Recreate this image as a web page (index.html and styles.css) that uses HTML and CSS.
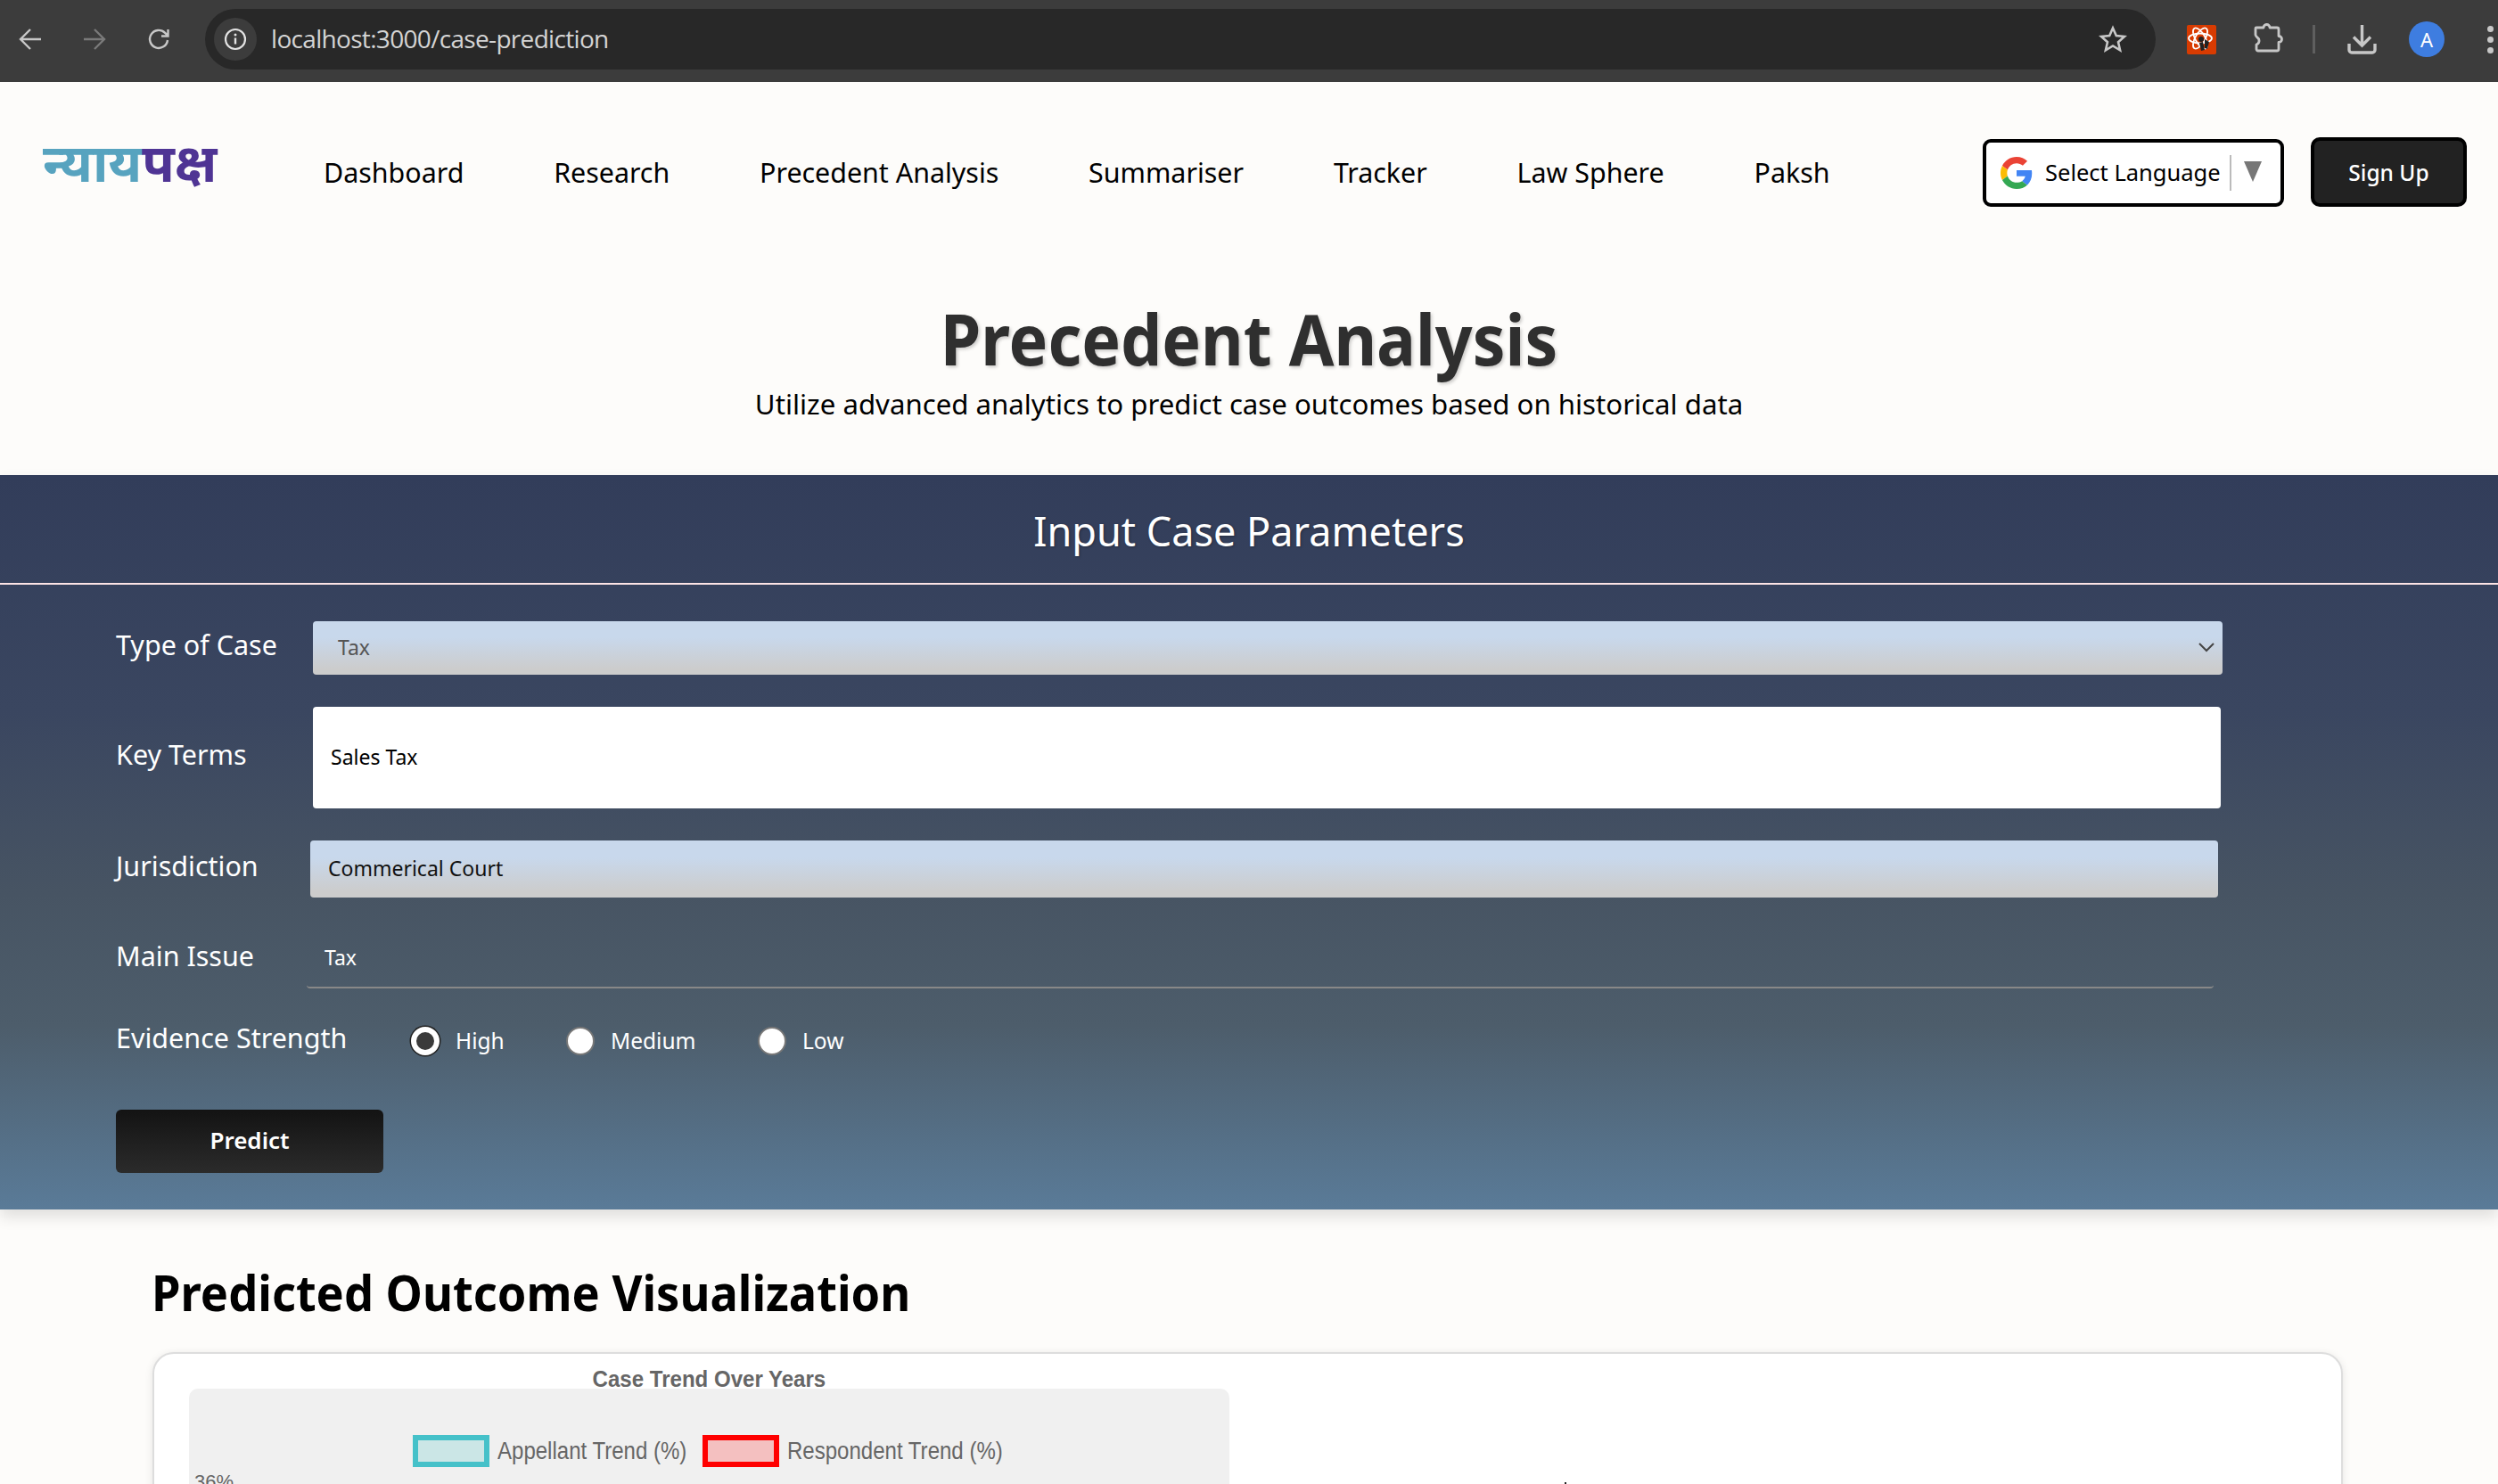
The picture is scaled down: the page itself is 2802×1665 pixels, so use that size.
FILE: index.html
```html
<!DOCTYPE html>
<html lang="en">
<head>
<meta charset="utf-8">
<title>Precedent Analysis</title>
<link rel="stylesheet" href="styles.css">
</head>
<body>
<div class="chrome">
  <div class="chrome-nav">
    <svg width="26" height="26" viewBox="0 0 26 26"><path d="M25 13H3M13 2L2 13l11 11" fill="none" stroke="#c7c7c7" stroke-width="2.4"/></svg>
    <svg width="26" height="26" viewBox="0 0 26 26"><path d="M1 13h22M13 2l11 11-11 11" fill="none" stroke="#7a7a7a" stroke-width="2.4"/></svg>
    <svg width="26" height="26" viewBox="0 0 26 26"><path d="M23 14a10 10 0 1 1-2.900-8.200L23 8.700M23.500 2v7.500H16" fill="none" stroke="#c7c7c7" stroke-width="2.400"/></svg>
  </div>
  <div class="omnibox">
    <span class="site-info"><svg width="26" height="26" viewBox="0 0 26 26"><circle cx="13" cy="13" r="11" fill="none" stroke="#e3e3e3" stroke-width="2.200"/><path d="M13 11.500v7" stroke="#e3e3e3" stroke-width="2.400"/><circle cx="13" cy="8" r="1.500" fill="#e3e3e3"/></svg></span>
    <span class="url">localhost:3000/case-prediction</span>
    <svg class="star" width="32" height="32" viewBox="0 0 32 32"><path d="M16 3.500l3.800 8.600 9.200.9-7 6.200 2.100 9.100-8.100-4.800-8.100 4.800 2.100-9.100-7-6.200 9.200-.9z" fill="none" stroke="#c7c7c7" stroke-width="2.600"/></svg>
  </div>
  <div class="chrome-tools">
    <svg class="ext" width="33" height="33" viewBox="0 0 33 33"><rect width="33" height="33" rx="2" fill="#d83b01"/><g fill="none" stroke="#fff" stroke-width="1.800"><ellipse cx="15" cy="15" rx="13" ry="5.500"/><ellipse cx="15" cy="15" rx="13" ry="5.500" transform="rotate(60 15 15)"/><ellipse cx="15" cy="15" rx="13" ry="5.500" transform="rotate(120 15 15)"/></g><circle cx="16" cy="16" r="3" fill="#222"/><path d="M14 20l4-1 2 9-4 1zM20 16l5 3-2 8-3-1z" fill="#222"/></svg>
    <svg class="puzzle" width="33" height="33" viewBox="0 0 33 33"><path d="M3 5h8a3.500 3.500 0 0 1 7 0h8a2 2 0 0 1 2 2v7.500a3.500 3.500 0 0 1 0 7V29a2 2 0 0 1-2 2H5a2 2 0 0 1-2-2v-5a4.500 4.500 0 0 0 1-8 5 5 0 0 1-2-3V6a1 1 0 0 1 1-1z" fill="none" stroke="#c7c7c7" stroke-width="2.800" stroke-linejoin="round"/></svg>
    <span class="sep"></span>
    <svg class="dl" width="33" height="33" viewBox="0 0 33 33"><path d="M16.500 0v23M7 13.500l9.500 9.500L26 13.500M2 21v7a3 3 0 0 0 3 3h23a3 3 0 0 0 3-3v-7" fill="none" stroke="#c7c7c7" stroke-width="3.400"/></svg>
    <span class="avatar">A</span>
    <span class="dots"><i></i><i></i><i></i></span>
  </div>
</div>

<header class="site-header">
  <div class="logo" lang="hi"><span class="logo-a">न्याय</span><span class="logo-b">पक्ष</span></div>
  <nav class="nav">
    <a>Dashboard</a><a>Research</a><a>Precedent Analysis</a><a>Summariser</a><a>Tracker</a><a>Law Sphere</a><a>Paksh</a>
  </nav>
  <div class="lang">
    <svg width="36" height="36" viewBox="0 0 48 48"><path fill="#EA4335" d="M24 9.500c3.540 0 6.710 1.220 9.210 3.600l6.850-6.850C35.900 2.380 30.470 0 24 0 14.620 0 6.510 5.380 2.560 13.220l7.980 6.190C12.430 13.720 17.740 9.500 24 9.500z"/><path fill="#4285F4" d="M46.980 24.550c0-1.570-.15-3.090-.38-4.550H24v9.020h12.940c-.58 2.960-2.260 5.480-4.780 7.180l7.730 6c4.510-4.180 7.090-10.360 7.090-17.650z"/><path fill="#FBBC05" d="M10.530 28.590c-.48-1.450-.76-2.990-.76-4.590s.27-3.140.76-4.590l-7.980-6.190C.92 16.460 0 20.120 0 24c0 3.880.92 7.540 2.560 10.780l7.970-6.190z"/><path fill="#34A853" d="M24 48c6.480 0 11.930-2.130 15.890-5.810l-7.730-6c-2.150 1.450-4.920 2.300-8.160 2.300-6.260 0-11.570-4.220-13.470-9.910l-7.980 6.190C6.510 42.620 14.620 48 24 48z"/></svg>
    <span class="lang-text">Select Language</span>
    <span class="lang-sep"></span>
    <span class="lang-arrow"></span>
  </div>
  <button class="signup">Sign Up</button>
</header>

<section class="hero">
  <h1>Precedent Analysis</h1>
  <p>Utilize advanced analytics to predict case outcomes based on historical data</p>
</section>

<section class="params">
  <h2>Input Case Parameters</h2>
  <div class="form">
    <div class="row row-type">
      <label>Type of Case</label>
      <div class="field select">Tax<svg width="18" height="11" viewBox="0 0 18 11"><path d="M1 1l8 8 8-8" fill="none" stroke="#444" stroke-width="2"/></svg></div>
    </div>
    <div class="row row-key">
      <label>Key Terms</label>
      <div class="field white">Sales Tax</div>
    </div>
    <div class="row row-jur">
      <label>Jurisdiction</label>
      <div class="field grad">Commerical Court</div>
    </div>
    <div class="row row-main">
      <label>Main Issue</label>
      <div class="field under">Tax</div>
    </div>
    <div class="row row-ev">
      <label>Evidence Strength</label>
      <div class="radios">
        <span class="radio on"></span><span class="rl rl-high">High</span>
        <span class="radio"></span><span class="rl rl-med">Medium</span>
        <span class="radio"></span><span class="rl">Low</span>
      </div>
    </div>
    <button class="predict">Predict</button>
  </div>
</section>

<section class="outcome">
  <h2>Predicted Outcome Visualization</h2>
  <div class="card">
    <div class="chart-title"><span>Case Trend Over Years</span></div>
    <div class="chart">
      <div class="legend">
        <span class="swatch teal"></span><span class="ltext lt-a">Appellant Trend (%)</span>
        <span class="swatch red"></span><span class="ltext lt-b">Respondent Trend (%)</span>
      </div>
      <div class="ytick">36%</div>
    </div>
    <span class="tick"></span>
  </div>
</section>
</body>
</html>
```
FILE: styles.css
```css
* { box-sizing: border-box; }
html, body { margin: 0; height: 1665px; overflow: hidden; }
body { background: #fdfcfa; font-family: "Noto Sans", "Open Sans", sans-serif; color: #000; }

.chrome { height: 92px; background: #3c3c3c; display: flex; align-items: center; padding: 2px 0 6px; }
.chrome-nav { width: 230px; display: flex; gap: 46px; padding-left: 21px; align-items: center; flex: none; }
.omnibox { width: 2188px; height: 68px; background: #282828; border-radius: 34px; display: flex; align-items: center; padding: 0 32px 0 10px; flex: none; }
.site-info { width: 48px; height: 48px; border-radius: 50%; background: #3c3c3c; display: flex; align-items: center; justify-content: center; }
.url { font-family: "Open Sans", sans-serif; font-size: 28px; color: #d4d4d4; margin: 0 0 3px 16px; flex: 1; letter-spacing: -0.68px; }
.star { flex: none; }
.chrome-tools { display: flex; align-items: center; flex: 1; padding-left: 35px; }
.ext { flex: none; margin-right: 42px; }
.puzzle { flex: none; margin-right: 33px; margin-top: -3px; }
.sep { width: 3px; height: 32px; background: #5f5f5f; margin-right: 36px; flex: none; }
.dl { flex: none; margin-right: 36px; }
.avatar { width: 40px; height: 40px; border-radius: 50%; background: #3e7de0; color: #fff; font-size: 22px; display: flex; align-items: center; justify-content: center; margin-right: 48px; flex: none; }
.dots { display: flex; flex-direction: column; gap: 5px; }
.dots i { width: 7px; height: 7px; border-radius: 50%; background: #c7c7c7; display: block; }

.site-header { height: 202px; display: flex; align-items: center; padding: 0 35px 0 48px; }
.logo { width: 315px; font-family: "Noto Sans Devanagari", "Noto Sans", sans-serif; font-size: 59.5px; font-weight: 700; flex: none; margin-top: -8px; white-space: nowrap; }
.logo-a { color: #57a3bf; }
.logo-b { color: #4f3494; }
.nav { display: flex; gap: 100.8px; font-size: 30.4px; flex: 1; }
.lang { width: 338px; height: 76px; border: 4px solid #000; border-radius: 9px; background: #fff; display: flex; align-items: center; padding-left: 16px; font-size: 25.5px; margin-right: 30px; margin-top: 2px; flex: none; }
.lang-text { margin: 0 0 2px 14px; white-space: nowrap; }
.lang-sep { width: 2px; height: 40px; background: #bbb; margin-left: 10px; }
.lang-arrow { width: 0; height: 0; border-left: 10px solid transparent; border-right: 10px solid transparent; border-top: 23px solid #777; margin-left: 14px; margin-top: -4px; }
.signup { width: 175px; height: 78px; background: #222; border: 4px solid #000; border-radius: 10px; color: #fff; font: 500 24.5px "Noto Sans", sans-serif; }

.hero { height: 239px; padding-top: 38px; text-align: center; }
.hero h1 { margin: 0; font-size: 78px; line-height: 96px; font-weight: 700; color: #2f2f2f; transform: scaleX(.94); text-shadow: 2px 2px 4px rgba(0,0,0,.2); }
.hero p { margin: 3px 0 0; font-size: 31.2px; line-height: 44px; }

.params { height: 824px; background: linear-gradient(180deg, #323d5a 0%, #3a4660 32%, #475463 57%, #4d5d6b 75%, #5a7b98 100%); box-shadow: 0 8px 16px rgba(0,0,0,.12); color: #fff; }
.params h2 { margin: 0; height: 123px; line-height: 126px; text-align: center; font-weight: 400; font-size: 45px; border-bottom: 2px solid #fde4e6; text-shadow: 1px 1px 3px rgba(0,0,0,.3); }
.form { padding-left: 130px; }
.row { display: flex; align-items: center; }
.row label { font-size: 30.5px; flex: none; padding-bottom: 8px; }
.field { font-size: 23px; display: flex; align-items: center; border-radius: 4px; padding-bottom: 2px; }
.row-type { margin-top: 41px; }
.row-type label { width: 221px; }
.select { width: 2142px; height: 60px; background: linear-gradient(180deg, #c8d8ec 30%, #cccccc 90%); color: #555; padding-left: 28px; padding-right: 9px; justify-content: space-between; }
.row-key { margin-top: 36px; }
.row-key label { width: 221px; }
.white { width: 2140px; height: 114px; background: #fff; color: #000; padding-left: 20px; }
.row-jur { margin-top: 36px; }
.row-jur label { width: 218px; }
.grad { width: 2140px; height: 64px; background: linear-gradient(180deg, #c8d8ec 30%, #cccccc 90%); color: #111; padding-left: 20px; }
.row-main { margin-top: 36px; }
.row-main label { width: 214px; }
.under { width: 2139px; height: 66px; border-bottom: 2px solid #888; color: #fff; padding-left: 20px; }
.row-ev { margin-top: 34px; }
.row-ev label { width: 331px; }
.radios { display: flex; align-items: center; font-size: 24.5px; color: #fff; }
.radio { width: 32px; height: 32px; border-radius: 50%; background: #fff; border: 2px solid #777; flex: none; }
.radio.on { background: #3a3a3a; border: 6px solid #fff; box-shadow: 0 0 0 1.5px #222; }
.rl { margin: 0 0 2px 18px; }
.rl-high { width: 124px; }
.rl-med { width: 165px; }
.predict { display: block; margin-top: 52px; width: 300px; height: 71px; border: 0; border-radius: 6px; background: linear-gradient(180deg, #131313 0%, #2b2b2b 100%); color: #fff; font: 600 26px "Noto Sans", sans-serif; padding-bottom: 4px; }

.outcome { padding: 64px 174px 0 170px; }
.outcome h2 { margin: 0; font-size: 56px; line-height: 56px; font-weight: 700; color: #000; transform: scaleX(.935); transform-origin: left center; white-space: nowrap; }
.card { margin-top: 40px; margin-left: 1px; height: 400px; border: 2px solid #ddd; border-radius: 24px; background: #fff; box-shadow: 0 2px 10px rgba(0,0,0,.1); padding: 13px 0 0 39px; position: relative; }
.chart-title { width: 1167px; text-align: center; font-family: "Liberation Sans", sans-serif; font-weight: 700; font-size: 26px; color: #666; height: 26px; line-height: 30px; }
.chart-title span { display: inline-block; transform: scaleX(.925); }
.chart { width: 1167px; height: 300px; background: #f0f0f0; border-radius: 10px; padding-top: 52px; position: relative; font-family: "Liberation Sans", sans-serif; color: #666; }
.legend { display: flex; align-items: center; padding-left: 251px; font-size: 27px; }
.swatch { width: 86px; height: 36px; border: 6px solid; flex: none; }
.teal { border-color: #45c1c9; background: #cbe6e6; }
.red { border-color: #f00; background: #f4c0c0; }
.ltext { margin: 0 17px 0 9px; transform: scaleX(.89); transform-origin: left center; white-space: nowrap; }
.lt-a { width: 213px; }
.lt-b { width: 243px; }
.ytick { position: absolute; left: 6px; top: 92px; font-size: 22px; }
.tick { position: absolute; left: 1582px; top: 144px; width: 2px; height: 3px; background: #222; }
```
